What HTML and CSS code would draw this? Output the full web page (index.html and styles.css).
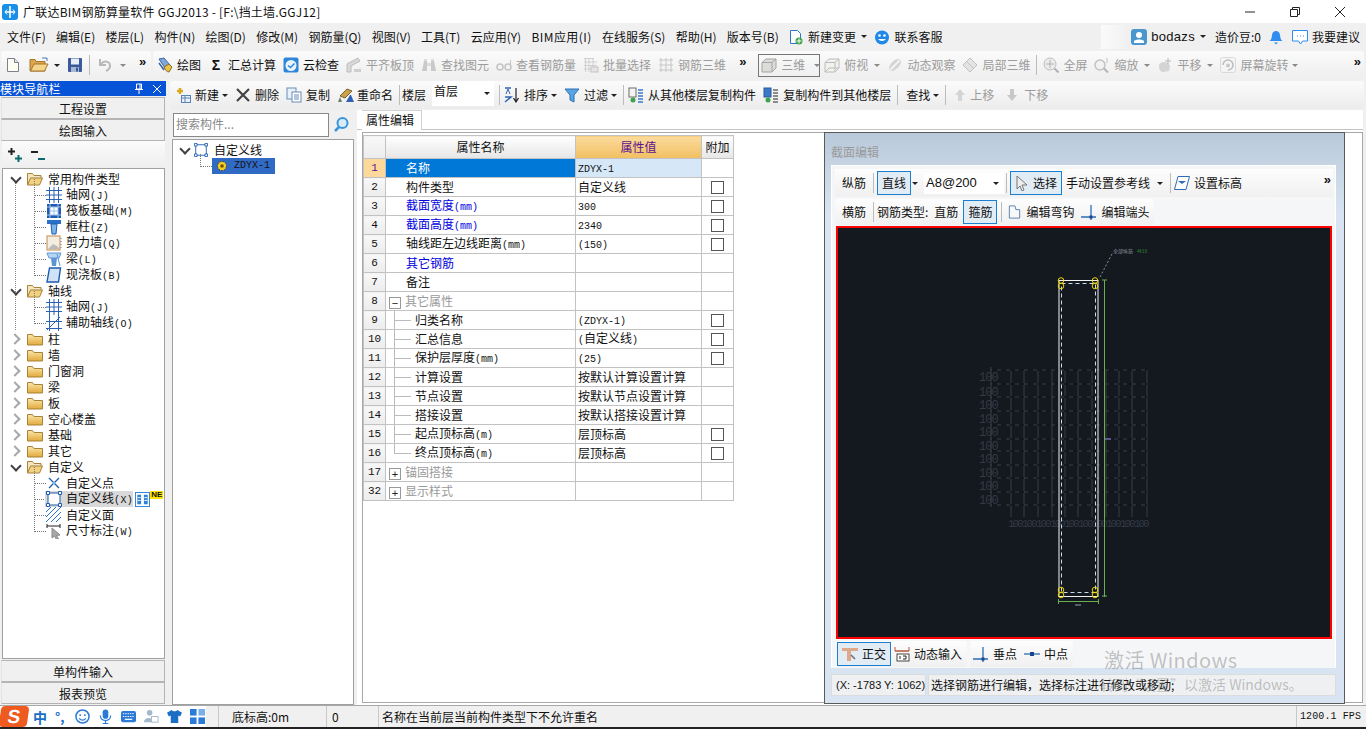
FILE: index.html
```html
<!DOCTYPE html>
<html lang="zh-CN">
<head>
    <meta charset="UTF-8">
    <title>广联达BIM钢筋算量软件 GGJ2013</title>
    <link rel="stylesheet" href="styles.css">
</head>
<body>
    <svg class="defs" aria-hidden="true">
        <symbol id="i-new" viewBox="0 0 16 16"><path d="M2.500 1.500h7l4 4v9h-11z" fill="#fdfdf3" stroke="#7c818c"/><path d="M9.500 1.500v4h4" fill="#e4e4e4" stroke="#7c818c"/></symbol>
        <symbol id="i-open" viewBox="0 0 22 16"><path d="M1 5V2.500h5l1 2h9V14H1z" fill="#dca64a" stroke="#a5772c"/><path d="M1.500 14l3.500-7h14l-3.500 7z" fill="#f5d58c" stroke="#a5772c"/><path d="M13 1l5 0 0 3" fill="none" stroke="#4a78b8"/></symbol>
        <symbol id="i-save" viewBox="0 0 16 16"><rect x="1" y="1" width="14" height="14" rx="1" fill="#3c5a9a"/><rect x="4" y="1.500" width="8" height="6" fill="#e8edf6"/><rect x="4" y="10" width="8" height="5" fill="#a9b8d4"/><rect x="9" y="10.500" width="2" height="4" fill="#3c5a9a"/></symbol>
        <symbol id="i-undo" viewBox="0 0 16 16"><path d="M3 2v6h6" fill="none" stroke="#b8b8b8" stroke-width="2"/><path d="M4 7c3-4 9-3 9 2 0 2-2 4-4 5" fill="none" stroke="#b8b8b8" stroke-width="2"/></symbol>
        <symbol id="i-draw" viewBox="0 0 16 16"><path d="M2 2l5-1 6 7-5 3z" fill="#7fa8d8" stroke="#3a64a8"/><path d="M7 10l5-3 3 3-3 5c-2 0-4-2-5-5z" fill="#e8c24a" stroke="#8a6d1c"/><path d="M2 6l5 7" stroke="#3a64a8" stroke-width="1.500"/></symbol>
        <symbol id="i-cloud" viewBox="0 0 16 16"><rect x="0.500" y="0.500" width="15" height="15" rx="2" fill="#2f86d8"/><circle cx="8" cy="8.500" r="5.500" fill="#e8f3fc"/><path d="M5 8.500l2.500 2 4-4" fill="none" stroke="#2f86d8" stroke-width="1.500"/></symbol>
        <symbol id="i-align" viewBox="0 0 16 16"><path d="M1 7l11-6 2 3-9 5v6H1z" fill="#d8d8d8" stroke="#bdbdbd"/><path d="M8 12h7v3H8z" fill="#cfcfcf"/></symbol>
        <symbol id="i-binoc" viewBox="0 0 16 16"><path d="M1 14l2-10h3v10zM10 14V4h3l2 10z" fill="#c9c9c9"/><path d="M3 2h3v2H3zM10 2h3v2h-3zM6 6h4v3H6z" fill="#dcdcdc"/></symbol>
        <symbol id="i-glass" viewBox="0 0 16 16"><circle cx="4" cy="10" r="3" fill="none" stroke="#c4c4c4" stroke-width="1.500"/><circle cx="12" cy="10" r="3" fill="none" stroke="#c4c4c4" stroke-width="1.500"/><path d="M14.500 10V3" stroke="#c4c4c4"/></symbol>
        <symbol id="i-batch" viewBox="0 0 16 16"><path d="M1 1.500h10M1 5h13M1 8.500h13M1 12h13M2.500 1v14M6 1v14M10 1v14" stroke="#cfcfcf" fill="none"/><rect x="8" y="10" width="7" height="5" fill="#e4e4e4" stroke="#c4c4c4"/></symbol>
        <symbol id="i-rebar" viewBox="0 0 16 16"><path d="M1 3h14M1 8h14M1 13h14M3 1v14M8 1v14M13 1v14" stroke="#c6c6c6" fill="none"/></symbol>
        <symbol id="i-cube" viewBox="0 0 16 16"><path d="M1 5.500L5 2h10v9l-4 4H1z" fill="#dcdcd8" stroke="#a4a4a4"/><path d="M1 5.500h10V15M11 5.500L15 2" fill="none" stroke="#a4a4a4"/></symbol>
        <symbol id="i-cube2" viewBox="0 0 16 16"><path d="M1 5.500L5 2h10v9l-4 4H1z" fill="#f1f1ee" stroke="#bcbcbc"/><path d="M1 5.500h10V15M11 5.500L15 2M1 15l4-4h10" fill="none" stroke="#bcbcbc"/></symbol>
        <symbol id="i-orbit" viewBox="0 0 16 16"><ellipse cx="8" cy="8" rx="7.500" ry="4" transform="rotate(-45 8 8)" fill="#d4d4d4"/><path d="M3 13L13 3" stroke="#f2f2f2" stroke-width="2"/></symbol>
        <symbol id="i-local" viewBox="0 0 16 16"><path d="M1 8l7-7 7 7-7 7z" fill="#e4e4e4" stroke="#bfbfbf"/><path d="M4.500 4.500l7 7M8 1l7 7M1 8l7 7" fill="none" stroke="#bfbfbf"/></symbol>
        <symbol id="i-zfull" viewBox="0 0 16 16"><circle cx="7" cy="7" r="6" fill="#ececec" stroke="#bcbcbc"/><path d="M7 3v8M3 7h8" stroke="#b0b0b0"/><path d="M11.500 11.500l4 4" stroke="#b0b0b0" stroke-width="2"/></symbol>
        <symbol id="i-zoom" viewBox="0 0 16 16"><circle cx="6" cy="8" r="5" fill="#f2f2f2" stroke="#c2c2c2" stroke-width="1.500"/><path d="M10 11.500l4 4" stroke="#b4b4b4" stroke-width="2"/><path d="M13 1v5" stroke="#c2c2c2"/></symbol>
        <symbol id="i-pan" viewBox="0 0 16 16"><path d="M2 9c0-3 3-4 5-4l4 1 2 3-1 5-6 1c-2 0-4-2-4-6z" fill="#d4d4d4"/><path d="M11 1v6M8 4h6" stroke="#b8b8b8"/></symbol>
        <symbol id="i-rot" viewBox="0 0 16 16"><rect x="0.500" y="0.500" width="15" height="15" rx="2" fill="#f4f4f4" stroke="#dadada"/><path d="M3 8a5 5 0 1 1 5 5" fill="none" stroke="#bdbdbd" stroke-width="1.500"/><circle cx="8" cy="8.500" r="2" fill="#c8c8c8"/></symbol>
        <symbol id="i-change" viewBox="0 0 16 16"><path d="M2.500 1.500h7l3 3v10h-10z" fill="#fff" stroke="#2d78c8"/><circle cx="11" cy="12" r="3.500" fill="#3da34a"/><path d="M11 9.500v5M8.500 12h5" stroke="#fff"/></symbol>
        <symbol id="i-face" viewBox="0 0 16 16"><circle cx="8" cy="8.500" r="7" fill="#2088e8"/><circle cx="5.500" cy="6.500" r="1.300" fill="#fff"/><circle cx="10.500" cy="6.500" r="1.300" fill="#fff"/><path d="M4 10c2 2.500 6 2.500 8 0" fill="#fff"/></symbol>
        <symbol id="i-user" viewBox="0 0 16 16"><rect width="16" height="16" rx="3" fill="#4a96cf"/><circle cx="8" cy="6" r="3" fill="#fff"/><path d="M3 14v-2c2-2 8-2 10 0v2z" fill="#fff"/></symbol>
        <symbol id="i-bell" viewBox="0 0 16 16"><path d="M1.500 12c2-1 2-3 2.500-6 .5-3 2-4 4-4s3.500 1 4 4c.5 3 .5 5 2.500 6z" fill="#2f8cf0"/><path d="M6 13.500h4l-2 2z" fill="#2f8cf0"/></symbol>
        <symbol id="i-chat" viewBox="0 0 16 16"><path d="M.5 1.500h15v10.500h-5l-2 3-2-3h-6z" fill="#fff" stroke="#2f8cf0"/><path d="M5 7h1M8 7h1M11 7h1" stroke="#2f8cf0"/></symbol>
        <symbol id="i-add" viewBox="0 0 16 16"><path d="M5 1v6M2 4h6" stroke="#d8a820" stroke-width="2.500"/><rect x="6.500" y="8.500" width="9" height="7" fill="#e8f0fa" stroke="#5a82b4"/><path d="M7 11h8M10 9v6" stroke="#5a82b4"/></symbol>
        <symbol id="i-del" viewBox="0 0 16 16"><path d="M2 2l12 12M14 2L2 14" stroke="#444" stroke-width="2.200"/></symbol>
        <symbol id="i-copy" viewBox="0 0 16 16"><rect x="1" y="1" width="9" height="11" fill="#e8f0fa" stroke="#6b8db8"/><rect x="6" y="5" width="9" height="10" fill="#fff" stroke="#6b8db8"/><path d="M8 8h5M8 10h5M8 12h5" stroke="#6b8db8"/></symbol>
        <symbol id="i-rename" viewBox="0 0 18 16"><path d="M3 9l7-7 5 2-7 7z" fill="#c9a24a" stroke="#77632b"/><path d="M1 15l2-5 2 5z" fill="#6d7f62"/><path d="M9 15l4-7h1l3 7z" fill="#2f62b4"/></symbol>
        <symbol id="i-sort" viewBox="0 0 16 16"><path d="M1 1h6M1 15l6-5H1" fill="none" stroke="#3064b4" stroke-width="1.500"/><path d="M2 7l2-5 2 5" fill="none" stroke="#3064b4"/><path d="M12 1v13M9.500 11l2.500 4 2.500-4" fill="none" stroke="#222" stroke-width="1.200"/></symbol>
        <symbol id="i-filter" viewBox="0 0 16 16"><path d="M1 2h14l-5 6v7l-4-2V8z" fill="#5ba4e0" stroke="#2a70b8"/></symbol>
        <symbol id="i-cp1" viewBox="0 0 16 16"><rect x="1" y="1" width="7" height="9" fill="#f4f4f4" stroke="#6a6a6a"/><path d="M10 3h5M10 6h5M10 9h5M10 12h5M10 15h5" stroke="#3a78c8" stroke-width="1.600"/><circle cx="5" cy="13" r="2.500" fill="#3da34a"/></symbol>
        <symbol id="i-cp2" viewBox="0 0 16 16"><rect x="1" y="1" width="7" height="9" fill="#3a78c8" stroke="#2a5a9a"/><path d="M10 3h5M10 6h5M10 9h5M10 12h5M10 15h5" stroke="#6a6a6a" stroke-width="1.600"/><circle cx="5" cy="13" r="2.500" fill="#3da34a"/></symbol>
        <symbol id="i-up" viewBox="0 0 16 16"><path d="M8 2l5 6h-3v6H6V8H3z" fill="#d4d4d4"/></symbol>
        <symbol id="i-down" viewBox="0 0 16 16"><path d="M8 14L3 8h3V2h4v6h3z" fill="#c8c8c8"/></symbol>
        <symbol id="i-plus" viewBox="0 0 16 16"><path d="M4.500 1v7M1 4.500h7" stroke="#222" stroke-width="2"/><path d="M11.500 8v7M8 11.500h7" stroke="#0a6a70" stroke-width="2"/></symbol>
        <symbol id="i-minus" viewBox="0 0 16 16"><path d="M1 5h7" stroke="#222" stroke-width="2"/><path d="M8 12h7" stroke="#0a6a70" stroke-width="2"/></symbol>
        <symbol id="i-fold" viewBox="0 0 16 14"><path d="M.5 13V2.500h5l1.500 2h8.500V13z" fill="url(#fold)" stroke="#a58338"/></symbol>
        <symbol id="i-foldo" viewBox="0 0 16 14"><path d="M.5 13V1.500h5l1.500 2h7V6" fill="#f2e6c4" stroke="#a58338"/><path d="M.5 13l3-7h12l-3 7z" fill="#f3cf80" stroke="#a58338"/></symbol>
        <symbol id="i-grid" viewBox="0 0 16 16"><path d="M0 3.500h16M0 8h16M0 12.500h16M3.500 0v16M8 0v16M12.500 0v16" stroke="#2a62b8" fill="none"/></symbol>
        <symbol id="i-raft" viewBox="0 0 16 16"><rect x="1" y="1" width="14" height="14" fill="#1e5cb0"/><rect x="4" y="4" width="8" height="8" fill="#fff"/><path d="M4 8h8M8 4v8M1 4h14M1 12h14M4 1v14M12 1v14" stroke="#9cc0ec"/></symbol>
        <symbol id="i-col" viewBox="0 0 16 16"><rect x="1" y="1" width="14" height="4" fill="#2a70c8"/><path d="M5 5h6l-1 10H6z" fill="#7db4ea" stroke="#1e5cb0"/></symbol>
        <symbol id="i-wall" viewBox="0 0 16 16"><rect x="1" y="1" width="13" height="14" fill="#f4eee2" stroke="#c08a50"/><path d="M2 14l5-5 4 2 3 3z" fill="#bbb"/><path d="M15 3v11" stroke="#777" stroke-dasharray="1 2"/></symbol>
        <symbol id="i-beam" viewBox="0 0 16 16"><path d="M1 2h14l-2 5H3z" fill="#b8d6f4" stroke="#5a96d4"/><path d="M5 7h6l-1 8H6z" fill="#5a96d4"/><path d="M11 3l3 12" stroke="#5a96d4"/></symbol>
        <symbol id="i-slab" viewBox="0 0 16 16"><path d="M3.500 1h11l-2 14H1z" fill="#cfe2f6" stroke="#1e5cb0" stroke-width="1.400"/></symbol>
        <symbol id="i-axis" viewBox="0 0 16 16"><path d="M0 6.500h16M0 13.500h16M3.500 0v16M12.500 0v16" stroke="#2a62b8" fill="none"/><path d="M1 15L14 2" stroke="#2a62b8"/></symbol>
        <symbol id="i-x" viewBox="0 0 16 16"><path d="M3 3l10 10M13 3L3 13" stroke="#1e5cb0" stroke-width="1.300"/><circle cx="8" cy="8" r="1.200" fill="#7db4ea"/></symbol>
        <symbol id="i-rect" viewBox="0 0 16 16"><rect x="2" y="2" width="12" height="12" fill="#fff" stroke="#1e5cb0"/><path d="M.5.500h3v3h-3zM12.500.500h3v3h-3zM.5 12.500h3v3h-3zM12.500 12.500h3v3h-3z" fill="#fff" stroke="#1e5cb0"/></symbol>
        <symbol id="i-hatch" viewBox="0 0 16 16"><path d="M0 5L5 0M0 10L10 0M0 15L15 0M5 15L15 5M10 15l5-5" stroke="#2a70c8"/></symbol>
        <symbol id="i-dim" viewBox="0 0 16 16"><path d="M1 3h13M1 1v4M14 1v4" stroke="#222"/><path d="M6 5l8 7-3.500.5 2 3.500-2 .5-2-3.500L6 15z" fill="#a8a8a8" stroke="#8a8a8a"/></symbol>
        <symbol id="i-gear" viewBox="0 0 12 12"><circle cx="6" cy="6" r="4.500" fill="#f0d020" stroke="#444" stroke-dasharray="2 1"/><circle cx="6" cy="6" r="1.800" fill="#7a4a10"/></symbol>
        <symbol id="i-sel" viewBox="0 0 12 16"><path d="M1 1v13l3-3 2 5 2-1-2-5h5z" fill="#eee" stroke="#777"/></symbol>
        <symbol id="i-elev" viewBox="0 0 16 16"><path d="M4 1.500h11.500L12 14.500H.5z" fill="#fff" stroke="#2d6db4"/><path d="M4 6h8l-4 3z" fill="#2d6db4"/></symbol>
        <symbol id="i-hook" viewBox="0 0 16 16"><path d="M2.500 1.500h6l1 4h4v9h-11z" fill="#f8f8f8" stroke="#5a7fb0"/></symbol>
        <symbol id="i-end" viewBox="0 0 16 16"><path d="M0 13h15M10 1v15" stroke="#2d6db4" stroke-width="1.300"/><rect x="8.500" y="11.500" width="3" height="3" fill="#17468a"/></symbol>
        <symbol id="i-mid" viewBox="0 0 16 16"><path d="M0 8h16" stroke="#2d6db4" stroke-width="1.300"/><rect x="6" y="6" width="4" height="4" fill="#17468a"/></symbol>
        <symbol id="i-ortho" viewBox="0 0 16 16"><path d="M0 2h16v3H9v10H5V5H0z" fill="#dfa889"/><path d="M9 9l4 4" stroke="#667" stroke-width="1.500"/></symbol>
        <symbol id="i-dyn" viewBox="0 0 16 16"><path d="M1 1v4h14V1M1 5h14" fill="none" stroke="#b8553f"/><rect x="3" y="8" width="12" height="7" fill="#fff" stroke="#444"/><path d="M6 10v3M9 10h3v3H9" stroke="#222" fill="none"/></symbol>
        <symbol id="i-smile" viewBox="0 0 16 16"><circle cx="8" cy="8" r="7" fill="#fff" stroke="#2a7ad8" stroke-width="1.600"/><circle cx="5.500" cy="6.500" r="1" fill="#2a7ad8"/><circle cx="10.500" cy="6.500" r="1" fill="#2a7ad8"/><path d="M4.500 10c2 2.500 5 2.500 7 0" fill="none" stroke="#2a7ad8" stroke-width="1.300"/></symbol>
        <symbol id="i-mic" viewBox="0 0 16 16"><rect x="5" y="0.500" width="6" height="10" rx="3" fill="#2a7ad8"/><path d="M2.500 7c0 7 11 7 11 0M8 12.500V16M5 15.500h6" fill="none" stroke="#2a7ad8" stroke-width="1.300"/></symbol>
        <symbol id="i-keys" viewBox="0 0 16 16"><rect y="2" width="16" height="12" rx="2" fill="#2a7ad8"/><path d="M2 5h12M2 8h12" stroke="#fff" stroke-dasharray="1.500 1"/><path d="M4 11h8" stroke="#fff" stroke-width="1.300"/></symbol>
        <symbol id="i-person" viewBox="0 0 16 16"><circle cx="6" cy="4" r="3" fill="#a4b8cc"/><path d="M0 14c0-6 10-6 10 0z" fill="#a4b8cc"/><rect x="8" y="8" width="7" height="6" fill="#fff" stroke="#a4b8cc"/></symbol>
        <symbol id="i-shirt" viewBox="0 0 16 16"><path d="M5 1L0 4l2 4 2-1v8h8V7l2 1 2-4-5-3c-1 2-5 2-6 0z" fill="#1a6ec4"/></symbol>
        <symbol id="i-apps" viewBox="0 0 16 16"><rect width="7" height="7" fill="#2a7ad8"/><rect x="9" width="7" height="7" fill="#7ab0e8"/><rect y="9" width="7" height="7" fill="#2a7ad8"/><rect x="9" y="9" width="7" height="7" fill="#2a7ad8"/></symbol>
        <symbol id="i-cols" viewBox="0 0 16 16"><rect x=".5" y=".5" width="15" height="15" fill="#fff" stroke="#2f7fd4"/><path d="M2.500 3h4v10h-4zM9.500 3h4v10h-4z" fill="#2f7fd4"/><path d="M3 6h3M3 9h3M10 6h3M10 9h3" stroke="#fff"/></symbol>
        <symbol id="i-logo" viewBox="0 0 16 16"><rect width="16" height="16" rx="3" fill="#1a8fe8"/><path d="M8 2v12M3 8h10" stroke="#fff" stroke-width="1.600"/><path d="M5 5.500L3 8l2 2.500M11 5.500L13 8l-2 2.500" fill="none" stroke="#fff"/></symbol>
        <linearGradient id="fold" x1="0" y1="0" x2="0" y2="1"><stop offset="0" stop-color="#fbe7a8"/><stop offset="1" stop-color="#e2a93c"/></linearGradient>
    </svg>

    <header class="titlebar">
        <svg class="logo"><use href="#i-logo"/></svg>
        <span class="title">广联达BIM钢筋算量软件 GGJ2013 - [F:\挡土墙.GGJ12]</span>
        <div class="winctl">
            <svg width="12" height="12"><path d="M1 6h10" stroke="#222"/></svg>
            <svg width="12" height="12"><path d="M1.500 3.500h7v7h-7zM3.500 3.500v-2h7v7h-2" fill="none" stroke="#222"/></svg>
            <svg width="12" height="12"><path d="M1 1l10 10M11 1L1 11" stroke="#222"/></svg>
        </div>
    </header>

    <nav class="menubar">
        <span>文件(F)</span><span>编辑(E)</span><span>楼层(L)</span><span>构件(N)</span><span>绘图(D)</span><span>修改(M)</span><span>钢筋量(Q)</span><span>视图(V)</span><span>工具(T)</span><span>云应用(Y)</span><span class="menu-bim">BIM应用(I)</span><span>在线服务(S)</span><span>帮助(H)</span><span>版本号(B)</span>
        <span class="tool menu-change"><svg class="ic"><use href="#i-change"/></svg>新建变更<i class="dd dd-menu"></i></span>
        <span class="tool menu-service"><svg class="ic"><use href="#i-face"/></svg>联系客服</span>
        <div class="menu-right">
            <div class="patch"></div>
            <span class="tool"><svg class="ic"><use href="#i-user"/></svg><b class="uname">bodazs</b><i class="dd dd-menu"></i></span>
            <span class="beans">造价豆:0</span>
            <svg class="ic bell"><use href="#i-bell"/></svg>
            <span class="tool"><svg class="ic"><use href="#i-chat"/></svg>我要建议</span>
        </div>
    </nav>

    <div class="toolbar">
        <div class="band band-file">
            <svg class="ic"><use href="#i-new"/></svg>
            <svg class="ic ic-wide"><use href="#i-open"/></svg><i class="dd"></i>
            <svg class="ic"><use href="#i-save"/></svg>
            <i class="sep"></i>
            <svg class="ic"><use href="#i-undo"/></svg><i class="dd dd-off"></i>
            <span class="more">»</span>
        </div>
        <div class="band band-main">
            <span class="tool"><svg class="ic"><use href="#i-draw"/></svg>绘图</span>
            <span class="tool"><b class="sigma">Σ</b>汇总计算</span>
            <span class="tool"><svg class="ic"><use href="#i-cloud"/></svg>云检查</span>
            <span class="tool off"><svg class="ic"><use href="#i-align"/></svg>平齐板顶</span>
            <span class="tool off"><svg class="ic"><use href="#i-binoc"/></svg>查找图元</span>
            <span class="tool off"><svg class="ic"><use href="#i-glass"/></svg>查看钢筋量</span>
            <span class="tool off"><svg class="ic"><use href="#i-batch"/></svg>批量选择</span>
            <span class="tool off"><svg class="ic"><use href="#i-rebar"/></svg>钢筋三维</span>
            <span class="more more-mid">»</span>
            <span class="tool off view-box"><svg class="ic"><use href="#i-cube"/></svg>三维<i class="dd dd-off dd-far"></i></span>
            <span class="tool off"><svg class="ic"><use href="#i-cube2"/></svg>俯视<i class="dd dd-off dd-far"></i></span>
            <span class="tool off"><svg class="ic"><use href="#i-orbit"/></svg>动态观察</span>
            <span class="tool off"><svg class="ic"><use href="#i-local"/></svg>局部三维</span>
            <i class="sep"></i>
            <span class="tool off"><svg class="ic"><use href="#i-zfull"/></svg>全屏</span>
            <span class="tool off"><svg class="ic"><use href="#i-zoom"/></svg>缩放<i class="dd dd-off dd-far"></i></span>
            <span class="tool off"><svg class="ic"><use href="#i-pan"/></svg>平移<i class="dd dd-off dd-far"></i></span>
            <span class="tool off"><svg class="ic"><use href="#i-rot"/></svg>屏幕旋转<i class="dd dd-off"></i></span>
            <span class="more more-end">»</span>
        </div>
    </div>

    <div class="workspace">
        <aside class="nav">
            <div class="nav-head"><span>模块导航栏</span>
                <svg width="10" height="11"><path d="M2.500 1h5v5h-5zM1 6.500h8M5 6.500V11M6 1v5" fill="none" stroke="#fff"/></svg>
                <svg width="10" height="10"><path d="M1 1l8 8M9 1L1 9" stroke="#fff"/></svg>
            </div>
            <div class="nav-btn">工程设置</div>
            <div class="nav-btn nav-btn-next">绘图输入</div>
            <div class="nav-tools">
                <svg class="ic"><use href="#i-plus"/></svg>
                <svg class="ic"><use href="#i-minus"/></svg>
            </div>
            <div class="tree">
                <div class="guide"></div>
                <div class="row"><i class="chev open"></i><svg class="fold"><use href="#i-foldo"/></svg><span>常用构件类型</span></div>
                <div class="row kid"><svg class="ic"><use href="#i-grid"/></svg><span>轴网<em>(J)</em></span></div>
                <div class="row kid"><svg class="ic"><use href="#i-raft"/></svg><span>筏板基础<em>(M)</em></span></div>
                <div class="row kid"><svg class="ic"><use href="#i-col"/></svg><span>框柱<em>(Z)</em></span></div>
                <div class="row kid"><svg class="ic"><use href="#i-wall"/></svg><span>剪力墙<em>(Q)</em></span></div>
                <div class="row kid"><svg class="ic"><use href="#i-beam"/></svg><span>梁<em>(L)</em></span></div>
                <div class="row kid last"><svg class="ic"><use href="#i-slab"/></svg><span>现浇板<em>(B)</em></span></div>
                <div class="row"><i class="chev open"></i><svg class="fold"><use href="#i-foldo"/></svg><span>轴线</span></div>
                <div class="row kid"><svg class="ic"><use href="#i-grid"/></svg><span>轴网<em>(J)</em></span></div>
                <div class="row kid last"><svg class="ic"><use href="#i-axis"/></svg><span>辅助轴线<em>(O)</em></span></div>
                <div class="row"><i class="chev"></i><svg class="fold"><use href="#i-fold"/></svg><span>柱</span></div>
                <div class="row"><i class="chev"></i><svg class="fold"><use href="#i-fold"/></svg><span>墙</span></div>
                <div class="row"><i class="chev"></i><svg class="fold"><use href="#i-fold"/></svg><span>门窗洞</span></div>
                <div class="row"><i class="chev"></i><svg class="fold"><use href="#i-fold"/></svg><span>梁</span></div>
                <div class="row"><i class="chev"></i><svg class="fold"><use href="#i-fold"/></svg><span>板</span></div>
                <div class="row"><i class="chev"></i><svg class="fold"><use href="#i-fold"/></svg><span>空心楼盖</span></div>
                <div class="row"><i class="chev"></i><svg class="fold"><use href="#i-fold"/></svg><span>基础</span></div>
                <div class="row"><i class="chev"></i><svg class="fold"><use href="#i-fold"/></svg><span>其它</span></div>
                <div class="row"><i class="chev open"></i><svg class="fold"><use href="#i-foldo"/></svg><span>自定义</span></div>
                <div class="row kid"><svg class="ic"><use href="#i-x"/></svg><span>自定义点</span></div>
                <div class="row kid current"><svg class="ic"><use href="#i-rect"/></svg><span>自定义线<em>(X)</em></span><svg class="ic cols"><use href="#i-cols"/></svg><b class="ne">NE</b></div>
                <div class="row kid"><svg class="ic"><use href="#i-hatch"/></svg><span>自定义面</span></div>
                <div class="row kid last"><svg class="ic"><use href="#i-dim"/></svg><span>尺寸标注<em>(W)</em></span></div>
            </div>
            <div class="nav-btn">单构件输入</div>
            <div class="nav-btn nav-btn-next">报表预览</div>
        </aside>

        <main class="main">
            <div class="toolbar2">
                <span class="tool"><svg class="ic"><use href="#i-add"/></svg>新建<i class="dd"></i></span>
                <span class="tool"><svg class="ic"><use href="#i-del"/></svg>删除</span>
                <span class="tool"><svg class="ic"><use href="#i-copy"/></svg>复制</span>
                <span class="tool tool-tight"><svg class="ic ic-18"><use href="#i-rename"/></svg>重命名</span>
                <i class="sep"></i>
                <span class="floor-label">楼层</span>
                <div class="floor-combo">首层<i class="dd"></i></div>
                <i class="sep"></i>
                <span class="tool pull-2"><svg class="ic"><use href="#i-sort"/></svg>排序<i class="dd"></i></span>
                <span class="tool"><svg class="ic"><use href="#i-filter"/></svg>过滤<i class="dd"></i></span>
                <i class="sep"></i>
                <span class="tool pull-2"><svg class="ic"><use href="#i-cp1"/></svg>从其他楼层复制构件</span>
                <span class="tool"><svg class="ic"><use href="#i-cp2"/></svg>复制构件到其他楼层</span>
                <i class="sep"></i>
                <span class="tool find">查找<i class="dd"></i></span>
                <i class="sep"></i>
                <span class="tool off tool-tight"><svg class="ic"><use href="#i-up"/></svg>上移</span>
                <span class="tool off move-down"><svg class="ic"><use href="#i-down"/></svg>下移</span>
            </div>
            <div class="content">
                <section class="components">
                    <div class="search">
                        <div class="search-box">搜索构件...</div>
                        <svg width="18" height="18"><circle cx="10.500" cy="7" r="5" fill="#d8ecfa" stroke="#3a94dc" stroke-width="2"/><path d="M7 11l-4 4" stroke="#3a94dc" stroke-width="2.500"/></svg>
                    </div>
                    <div class="comp-tree">
                        <div class="comp-row"><i class="chev open"></i><svg class="ic ic-14"><use href="#i-rect"/></svg><span>自定义线</span></div>
                        <div class="comp-row comp-item"><div class="comp-sel"><svg class="gear"><use href="#i-gear"/></svg><em>ZDYX-1</em></div></div>
                    </div>
                </section>
                <section class="props">
                    <div class="tabs"><div class="tab">属性编辑</div></div>
                    <div class="props-body">
                        <table class="grid">
                            <colgroup><col class="c-num"><col class="c-name"><col class="c-val"><col class="c-add"></colgroup>
                            <thead><tr><th class="num"></th><th>属性名称</th><th class="hot">属性值</th><th>附加</th></tr></thead>
                            <tbody>
                                <tr class="active"><td class="num">1</td><td class="name">名称</td><td class="val"><em>ZDYX-1</em></td><td></td></tr>
                                <tr><td class="num">2</td><td class="name">构件类型</td><td class="val">自定义线</td><td><i class="chk"></i></td></tr>
                                <tr><td class="num">3</td><td class="name blue">截面宽度<em>(mm)</em></td><td class="val"><em>300</em></td><td><i class="chk"></i></td></tr>
                                <tr><td class="num">4</td><td class="name blue">截面高度<em>(mm)</em></td><td class="val"><em>2340</em></td><td><i class="chk"></i></td></tr>
                                <tr><td class="num">5</td><td class="name">轴线距左边线距离<em>(mm)</em></td><td class="val"><em>(150)</em></td><td><i class="chk"></i></td></tr>
                                <tr><td class="num">6</td><td class="name blue">其它钢筋</td><td></td><td></td></tr>
                                <tr><td class="num">7</td><td class="name">备注</td><td></td><td></td></tr>
                                <tr><td class="num">8</td><td class="name group"><i class="box">−</i>其它属性</td><td></td><td></td></tr>
                                <tr><td class="num">9</td><td class="name sub">归类名称</td><td class="val"><em>(ZDYX-1)</em></td><td><i class="chk"></i></td></tr>
                                <tr><td class="num">10</td><td class="name sub">汇总信息</td><td class="val"><em>(</em>自定义线<em>)</em></td><td><i class="chk"></i></td></tr>
                                <tr><td class="num">11</td><td class="name sub">保护层厚度<em>(mm)</em></td><td class="val"><em>(25)</em></td><td><i class="chk"></i></td></tr>
                                <tr><td class="num">12</td><td class="name sub">计算设置</td><td class="val">按默认计算设置计算</td><td></td></tr>
                                <tr><td class="num">13</td><td class="name sub">节点设置</td><td class="val">按默认节点设置计算</td><td></td></tr>
                                <tr><td class="num">14</td><td class="name sub">搭接设置</td><td class="val">按默认搭接设置计算</td><td></td></tr>
                                <tr><td class="num">15</td><td class="name sub">起点顶标高<em>(m)</em></td><td class="val">层顶标高</td><td><i class="chk"></i></td></tr>
                                <tr><td class="num">16</td><td class="name sub sub-last">终点顶标高<em>(m)</em></td><td class="val">层顶标高</td><td><i class="chk"></i></td></tr>
                                <tr><td class="num">17</td><td class="name group"><i class="box">+</i>锚固搭接</td><td></td><td></td></tr>
                                <tr><td class="num">32</td><td class="name group"><i class="box">+</i>显示样式</td><td></td><td></td></tr>
                            </tbody>
                        </table>
                    </div>
                </section>
            </div>
        </main>

        <div class="dialog">
            <div class="dlg-title">截面编辑</div>
            <div class="dlg-inner">
                <div class="dlg-bar">
                    <span>纵筋</span><i class="sep"></i>
                    <span class="pressed">直线</span><i class="dd dd-line"></i>
                    <div class="dlg-combo">A8@200<i class="dd"></i></div>
                    <i class="sep sep-tight"></i>
                    <span class="pressed tool pick"><svg class="ic ic-12"><use href="#i-sel"/></svg>选择</span>
                    <span class="tool">手动设置参考线<i class="dd dd-refline"></i></span>
                    <i class="sep"></i>
                    <span class="tool"><svg class="ic"><use href="#i-elev"/></svg>设置标高</span>
                    <span class="more more-end">»</span>
                </div>
                <div class="dlg-bar dlg-bar2">
                    <span>横筋</span><i class="sep"></i>
                    <span class="bar-type">钢筋类型:</span><span>直筋</span>
                    <span class="pressed stirrup">箍筋</span>
                    <i class="sep"></i>
                    <span class="tool hook"><svg class="ic ic-15"><use href="#i-hook"/></svg>编辑弯钩</span>
                    <span class="tool head"><svg class="ic"><use href="#i-end"/></svg>编辑端头</span>
                </div>
                <svg class="canvas" viewBox="838 228 492 409">
                    <rect x="838" y="228" width="492" height="409" fill="#14181f"/>
                    <g class="faint-lines">
                        <path d="M990 370H1147M990 384H1147M990 397H1147M990 411H1147M990 425H1147M990 439H1147M990 451H1147M990 465H1147M990 478H1147M990 492H1147M990 505H1147"/>
                        <path d="M991 367V507M1011 370V517M1024 370V517M1038 370V517M1052 370V517M1065 370V517M1078 370V517M1092 370V517M1106 370V517M1119 370V517M1132 370V517M1147 370V517"/>
                    </g>
                    <path class="black-dash" d="M992 370H1147M992 384H1147M992 397H1147M992 411H1147M992 425H1147M992 439H1147M992 451H1147M992 465H1147M992 478H1147M992 492H1147M992 505H1147"/>
                    <g class="dim-text">
                        <text x="979" y="381">100</text><text x="979" y="396">100</text><text x="979" y="409">100</text><text x="979" y="423">100</text><text x="979" y="436">100</text><text x="979" y="450">100</text><text x="979" y="463">100</text><text x="979" y="477">100</text><text x="979" y="490">100</text><text x="979" y="504">100</text>
                    </g>
                    <g class="dim-text dim-bottom">
                        <text x="1008" y="527">100</text><text x="1022" y="527">100</text><text x="1036" y="527">100</text><text x="1050" y="527">100</text><text x="1064" y="527">100</text><text x="1078" y="527">100</text><text x="1092" y="527">100</text><text x="1106" y="527">100</text><text x="1120" y="527">100</text><text x="1134" y="527">100</text>
                    </g>
                    <rect x="1059" y="280.500" width="39" height="316" fill="none" stroke="#f2f2f2" stroke-width="1"/>
                    <rect x="1061.500" y="283.500" width="34" height="309" fill="none" stroke="#c8d8ee" stroke-dasharray="4 3"/>
                    <path d="M1104.500 280V597M1102 280h5M1102 596h5M1058 601.500h41M1058.500 599v5M1098.500 599v5" fill="none" stroke="#6ab04c"/>
                    <g fill="none" stroke="#f0d800">
                        <circle cx="1061" cy="280.500" r="2.800"/><circle cx="1061" cy="286" r="2.800"/><circle cx="1095" cy="280.500" r="2.800"/><circle cx="1095" cy="286" r="2.800"/>
                        <circle cx="1061" cy="590" r="2.800"/><circle cx="1061" cy="595" r="2.800"/><circle cx="1095" cy="590" r="2.800"/><circle cx="1095" cy="595" r="2.800"/>
                    </g>
                    <path d="M1100 277L1113 252" stroke="#8a8f96" stroke-dasharray="2 2"/>
                    <text class="tiny" x="1113" y="253">全部纵筋</text><text class="tiny tiny-g" x="1137" y="253">4t18</text>
                    <path d="M1105 439h6" stroke="#5a5a90" stroke-width="2"/>
                    <path d="M1075 605h6" stroke="#555c66" stroke-width="2"/>
                </svg>
                <div class="dlg-snap">
                    <div class="snap-band">
                        <span class="pressed tool"><svg class="ic"><use href="#i-ortho"/></svg>正交</span>
                        <span class="tool"><svg class="ic"><use href="#i-dyn"/></svg>动态输入</span>
                    </div>
                    <div class="snap-band">
                        <span class="tool"><svg class="ic"><use href="#i-end"/></svg>垂点</span>
                        <span class="tool"><svg class="ic"><use href="#i-mid"/></svg>中点</span>
                    </div>
                </div>
            </div>
            <div class="dlg-status">
                <div class="coords">(X: -1783 Y: 1062)</div>
                <div class="dlg-msg">选择钢筋进行编辑，选择标注进行修改或移动;</div>
            </div>
        </div>

        <div class="watermark">
            <div class="wm-big">激活 Windows</div>
            <div class="wm-small">转到“设置”以激活 Windows。</div>
        </div>
    </div>

    <footer class="statusbar">
        <div class="ime">
            <b class="ime-logo">S</b>
            <b class="ime-zh">中</b>
            <b class="ime-punc">°,</b>
            <svg class="ic"><use href="#i-smile"/></svg>
            <svg class="ic"><use href="#i-mic"/></svg>
            <svg class="ic"><use href="#i-keys"/></svg>
            <svg class="ic"><use href="#i-person"/></svg>
            <svg class="ic"><use href="#i-shirt"/></svg>
            <svg class="ic"><use href="#i-apps"/></svg>
        </div>
        <div class="cell cell-elev">底标高:0m</div>
        <div class="cell cell-zero">0</div>
        <div class="cell cell-msg">名称在当前层当前构件类型下不允许重名</div>
        <div class="cell cell-fps">1200.1 FPS</div>
    </footer>
</body>
</html>
```

FILE: styles.css
```css
* {
    margin: 0;
    padding: 0;
    box-sizing: border-box;
}

html, body {
    height: 729px;
    overflow: hidden;
}

body {
    background-color: #f0f0f0;
    color: #111;
    font-family: "Noto Sans CJK SC", "Liberation Sans", sans-serif;
    font-size: 12px;
    line-height: 16px;
}

em, i, b {
    font-style: normal;
}

.defs {
    position: absolute;
    width: 0;
    height: 0;
}

/* 通用 */
.ic {
    width: 16px;
    height: 16px;
    flex: none;
}

.ic-wide { width: 22px; }
.ic-18 { width: 18px; }
.ic-15 { width: 15px; }
.ic-14 { width: 14px; height: 14px; }
.ic-12 { width: 12px; }

.tool {
    display: inline-flex;
    align-items: center;
    gap: 4px;
    white-space: nowrap;
}

.tool.off {
    color: #9c9c9c;
}

.dd {
    display: inline-block;
    width: 0;
    height: 0;
    flex: none;
    border-left: 3px solid transparent;
    border-right: 3px solid transparent;
    border-top: 3px solid #222;
}

.dd-off { border-top-color: #8a8a8a; }
.dd-far { margin-left: 2px; }
.dd-menu { margin-left: 1px; }

.sep {
    display: block;
    flex: none;
    width: 1px;
    height: 20px;
    background-color: #bcbcbc;
}

.more {
    font: bold 13px/13px "Liberation Sans", sans-serif;
    color: #111;
    align-self: flex-start;
    margin-top: 4px;
}

/* 标题栏 */
.titlebar {
    height: 23px;
    background-color: #fff;
    display: flex;
    align-items: center;
    padding-left: 2px;
}

.logo {
    width: 16px;
    height: 16px;
}

.title {
    margin-left: 5px;
    font-size: 12px;
    letter-spacing: 0.22px;
}

.winctl {
    margin-left: auto;
    display: flex;
    gap: 33px;
    padding-right: 20px;
}

/* 菜单栏 */
.menubar {
    height: 27px;
    display: flex;
    align-items: center;
    gap: 10.3px;
    padding-left: 7px;
    white-space: nowrap;
    background-color: #f0f0f0;
}

.menu-bim {
    letter-spacing: 0.45px;
}

.menu-change {
    margin-left: -1px;
}

.menu-service {
    margin-left: -3px;
}

.menu-right {
    margin-left: auto;
    display: flex;
    align-items: center;
    gap: 9px;
    padding-right: 6px;
}

.patch {
    width: 24px;
    height: 24px;
    margin-right: -3px;
    background: linear-gradient(to right, #fafafa, #f2f2f2);
}

.uname {
    font-family: "Liberation Sans", sans-serif;
    font-weight: normal;
    font-size: 13px;
    letter-spacing: 0.3px;
}

.beans {
    margin-right: -2px;
}

.bell {
    margin-right: -1px;
}

/* 工具栏 */
.toolbar {
    height: 31px;
    display: flex;
    gap: 2px;
    padding: 1px 2px 2px 1px;
}

.band {
    display: flex;
    align-items: center;
    background: linear-gradient(#fbfbfb, #eeeeee);
    border-radius: 3px;
    white-space: nowrap;
}

.band-file {
    width: 150px;
    padding-left: 4px;
    position: relative;
}

.band-file .ic-wide { margin-left: 8px; }
.band-file .dd { margin-left: 3px; }
.band-file .ic-wide + .dd + .ic { margin-left: 7px; }
.band-file .sep { margin: 0 7px 0 6px; }
.band-file .dd-off { margin-left: 7px; }
.band-file .more { margin-left: 13px; }

.band-main {
    flex: 1;
    gap: 7px;
    padding-left: 4px;
}

.band-main .sep {
    margin: 0 -1px;
}

.sigma {
    width: 16px;
    text-align: center;
    font: bold 14px/16px "Liberation Sans", sans-serif;
}

.more-mid {
    margin-left: 6px;
    margin-right: 5px;
}

.view-box {
    width: 62px;
    height: 23px;
    margin-right: -3px;
    padding-left: 2px;
    border: 1px solid #777;
}

.view-box .dd-far {
    margin-left: 5px;
}

.more-end {
    margin-left: auto;
    margin-right: 3px;
}

/* 主区域 */
.workspace {
    height: 624px;
    display: flex;
    position: relative;
}

/* 模块导航栏 */
.nav {
    width: 166px;
    flex: none;
    display: flex;
    flex-direction: column;
}

.nav-head {
    height: 15px;
    background-color: #0653d8;
    color: #fff;
    display: flex;
    align-items: center;
    gap: 8px;
    padding-right: 4px;
    font-size: 12px;
    line-height: 15px;
}

.nav-head span {
    margin-right: auto;
    letter-spacing: 0.1px;
}

.nav-btn {
    height: 22px;
    margin: 1px 1px 0;
    line-height: 21px;
    text-align: center;
    background-color: #f0f0f0;
    border: 1px solid #b4b4b4;
    border-left-color: #e4e4e4;
    flex: none;
}

.nav-btn-next {
    margin-top: 0;
}

.nav-tools {
    height: 27px;
    margin: 0 1px 0 2px;
    display: flex;
    align-items: center;
    gap: 7px;
    padding-left: 5px;
    background: linear-gradient(#fbfbfb, #eeeeee);
    flex: none;
}

.tree {
    height: 491px;
    margin: 0 1px 0 2px;
    padding-top: 2px;
    border: 1px solid #a0a0a0;
    background-color: #fff;
    position: relative;
    overflow: hidden;
}

.guide {
    position: absolute;
    left: 12px;
    top: 14px;
    height: 147px;
    border-left: 1px dotted #888;
}

.row {
    height: 16px;
    display: flex;
    align-items: center;
    padding-left: 7px;
    white-space: nowrap;
    position: relative;
}

.row em {
    font: 10px/16px "Liberation Mono", monospace;
    letter-spacing: 0.4px;
}

.chev {
    width: 11px;
    height: 11px;
    flex: none;
    position: relative;
    margin-right: 6px;
}

.chev::before {
    content: "";
    position: absolute;
    left: 1px;
    top: 1px;
    width: 6px;
    height: 6px;
    border-right: 2px solid #a8a8a8;
    border-bottom: 2px solid #a8a8a8;
    transform: rotate(-45deg);
}

.chev.open::before {
    left: 2px;
    top: 0;
    border-color: #444;
    transform: rotate(45deg);
}

.fold {
    width: 16px;
    height: 14px;
    flex: none;
    margin-right: 5px;
}

.kid {
    padding-left: 43px;
}

.kid > span {
    margin-left: 4px;
}

.kid::before {
    content: "";
    position: absolute;
    left: 31px;
    top: -8px;
    width: 11px;
    height: 16px;
    border-left: 1px dotted #777;
    border-bottom: 1px dotted #777;
}

.current {
    width: 100%;
}

.current::after {
    content: "";
    position: absolute;
    left: 42px;
    top: 0;
    width: 88px;
    height: 16px;
    background-color: #d9d9d9;
    z-index: 0;
}

.current > * {
    position: relative;
    z-index: 1;
}

.current > .cols {
    width: 15px;
    height: 15px;
    margin-left: 2px;
}

.current > .ne {
    align-self: flex-start;
    height: 8px;
    padding: 0 1px;
    background-color: #ffe400;
    font: bold 8px/8px "Liberation Sans", sans-serif;
}

/* 右侧 */
.main {
    flex: 1;
    min-width: 0;
    display: flex;
    flex-direction: column;
    padding-left: 4px;
}

.toolbar2 {
    height: 28px;
    width: 1194px;
    display: flex;
    align-items: center;
    gap: 7px;
    padding-left: 5px;
    white-space: nowrap;
    background: linear-gradient(#fbfbfb, #ececec);
    border-radius: 3px;
}

.toolbar2 .dd { margin-left: -1px; }
.toolbar2 .sep { margin: 0 -1px; }
.tool-tight { gap: 2px; }
.pull-2 { margin-left: -2px; }
.find { margin-left: 2px; }
.move-down { margin-left: 3px; }

.floor-label {
    margin-left: -4px;
}

.floor-combo {
    width: 62px;
    height: 25px;
    align-self: flex-start;
    margin: 0 -1px;
    padding: 2px 0 0 2px;
    background-color: #fff;
    position: relative;
}

.floor-combo .dd {
    position: absolute;
    right: 4px;
    top: 11px;
}

.content {
    flex: 1;
    display: flex;
    padding-top: 1px;
}

/* 构件列表 */
.components {
    width: 182px;
    margin-left: 2px;
    flex: none;
    display: flex;
    flex-direction: column;
}

.search {
    height: 29px;
    display: flex;
    align-items: center;
    padding: 1px 0 0 1px;
    gap: 3px;
}

.search-box {
    width: 156px;
    height: 24px;
    padding: 2px 0 0 2px;
    border: 1px solid #888;
    background-color: #fff;
    color: #8a8a8a;
}

.comp-tree {
    flex: 1;
    border: 1px solid #a0a0a0;
    background-color: #fff;
    padding-top: 2px;
}

.comp-row {
    height: 16px;
    display: flex;
    align-items: center;
    padding-left: 6px;
    gap: 4px;
    position: relative;
}

.comp-row .chev { margin-right: 0; }
.comp-row span { margin-left: 2px; }

.comp-item::before {
    content: "";
    position: absolute;
    left: 27px;
    top: -4px;
    width: 11px;
    height: 12px;
    border-left: 1px dotted #777;
    border-bottom: 1px dotted #777;
}

.comp-sel {
    width: 63px;
    height: 16px;
    margin-left: 33px;
    padding-left: 4px;
    display: flex;
    align-items: center;
    gap: 6px;
    background-color: #316ac5;
}

.gear {
    width: 12px;
    height: 12px;
}

.comp-sel em {
    font: 10px/16px "Liberation Mono", monospace;
}

/* 属性编辑 */
.props {
    width: 1006px;
    margin-left: 3px;
    flex: none;
    display: flex;
    flex-direction: column;
    background-color: #fff;
}

.tabs {
    height: 20px;
    padding-left: 5px;
    border-bottom: 1px solid #c4c4c4;
}

.tab {
    width: 60px;
    height: 20px;
    padding-left: 4px;
    line-height: 18px;
    background-color: #fff;
    border: 1px solid #d0d0d0;
    border-bottom: none;
    border-left: none;
}

.props-body {
    flex: 1;
    margin: 2px 0 2px 5px;
    padding-top: 2px;
    border: 1px solid #a8a8a8;
}

.grid {
    border-collapse: collapse;
    table-layout: fixed;
    width: 370px;
}

.c-num { width: 22px; }
.c-name { width: 190px; }
.c-val { width: 126px; }
.c-add { width: 32px; }

.grid tr {
    height: 19px;
}

.grid th, .grid td {
    border: 1px solid #c2c2c2;
    font-weight: normal;
    height: 19px;
    line-height: 14px;
    white-space: nowrap;
    overflow: hidden;
    padding: 0;
}

.grid thead tr,
.grid th {
    height: 23px;
}

.grid th {
    text-align: center;
    background: linear-gradient(#ffffff, #e6e6e6);
}

.grid th.hot {
    color: #5c1290;
    background: linear-gradient(#fbdb9c, #f2bf62);
}

.grid .num {
    text-align: center;
    background: linear-gradient(#f8f8f8, #ececec);
    font: 11px/14px "Liberation Mono", monospace;
}

.grid .name {
    padding-left: 20px;
    position: relative;
}

.grid em {
    font: 10px/14px "Liberation Mono", monospace;
}

.grid .val {
    padding-left: 2px;
}

.grid .blue {
    color: #0000e0;
}

.active .num {
    color: #5c1290;
    background: #fcd99a !important;
}

.active .name {
    background-color: #0078d7;
    color: #fff;
}

.active .val {
    background-color: #d6e8f8;
}

.grid .group {
    padding-left: 3px;
    color: #9a9a9a;
}

.box {
    display: inline-block;
    width: 12px;
    height: 12px;
    margin-right: 4px;
    border: 1px solid #999;
    color: #222;
    font: 11px/10px "Liberation Sans", sans-serif;
    text-align: center;
    vertical-align: -1px;
}

.grid .sub {
    padding-left: 29px;
}

.sub::before {
    content: "";
    position: absolute;
    left: 8px;
    top: -1px;
    width: 16px;
    height: 10px;
    border-left: 1px solid #bbb;
    border-bottom: 1px solid #bbb;
}

.sub::after {
    content: "";
    position: absolute;
    left: 8px;
    top: 9px;
    height: 11px;
    border-left: 1px solid #bbb;
}

.sub-last::after {
    display: none;
}

.chk {
    display: block;
    width: 13px;
    height: 13px;
    margin: 0 auto;
    border: 1px solid #555;
    background-color: #fff;
}

/* 截面编辑窗口 */
.dialog {
    position: absolute;
    left: 824px;
    top: 51px;
    width: 521px;
    height: 572px;
    border: 1px solid #5a5a5a;
    background: linear-gradient(#b9c9da, #d8e4f1 80px, #d8e4f1);
    padding: 0 6px;
}

.dlg-title {
    height: 32px;
    padding-top: 11px;
    color: #9a9a9a;
}

.dlg-inner {
    width: 505px;
    height: 503px;
    background-color: #f5f6f7;
    border: 1px solid #fff;
    border-bottom: none;
    padding: 3px 2px 0 3px;
}

.dlg-bar {
    height: 28px;
    display: flex;
    align-items: center;
    gap: 4px;
    padding-left: 7px;
    white-space: nowrap;
    background: linear-gradient(#fdfdfd, #f0f0f0);
}

.dlg-bar .sep {
    margin: 0 -1px 0 3px;
}

.dlg-bar .sep-tight {
    margin-left: -2px;
}

.dlg-bar .stirrup + .sep {
    margin-left: 0;
}

.dd-line { margin-left: -3px; }
.dd-refline { margin-left: 3px; }

.pressed {
    height: 24px;
    padding: 0 4px;
    line-height: 22px;
    border: 1px solid #1a7fd0;
    background-color: #e2ecf5;
}

.pick {
    width: 52px;
    padding: 0 4px 0 5px;
    gap: 5px;
}

.dlg-combo {
    width: 80px;
    height: 21px;
    margin-left: 2px;
    padding: 1px 0 0 2px;
    background-color: #fff;
    font-family: "Liberation Sans", sans-serif;
    font-size: 13px;
    line-height: 18px;
    position: relative;
}

.dlg-combo .dd {
    position: absolute;
    right: 5px;
    top: 9px;
}

.dlg-bar .more-end {
    margin-right: 2px;
}

.dlg-bar2 {
    width: 319px;
    height: 26px;
    margin-top: 2px;
    border-radius: 3px;
}

.bar-type { margin-right: 2px; }
.stirrup { margin-left: 1px; }
.hook { margin-left: 2px; }
.head { margin-left: 3px; }

.canvas {
    display: block;
    width: 496px;
    height: 413px;
    margin: 1px 0 0 1px;
    border: 2px solid #f00;
}

.faint-lines path {
    fill: none;
    stroke: #363e48;
}

.black-dash {
    fill: none;
    stroke: #000;
    stroke-dasharray: 5 4;
}

.dim-text text {
    font: 12px "Liberation Mono", monospace;
    letter-spacing: -1px;
    fill: #333b46;
}

.dim-bottom text {
    font-size: 11px;
    letter-spacing: -2.1px;
}

.tiny {
    font: 5px "Noto Sans CJK SC", sans-serif;
    fill: #8a929c;
}

.tiny-g {
    fill: #2e8b2e;
}

.dlg-snap {
    display: flex;
    gap: 3px;
    height: 26px;
    margin-top: 2px;
    padding-left: 2px;
}

.snap-band {
    display: flex;
    align-items: center;
    gap: 3px;
    padding-right: 5px;
    background: linear-gradient(#fdfdfd, #f0f0f0);
    border-radius: 3px;
}

.snap-band:last-child {
    padding-left: 3px;
    gap: 7px;
}

.dlg-status {
    display: flex;
    gap: 2px;
    width: 505px;
    height: 22px;
    margin-top: 6px;
}

.coords {
    width: 95px;
    padding: 3px 0 0 4px;
    background-color: #eef0f2;
    border: 1px solid #dcdcdc;
    font-family: "Liberation Sans", sans-serif;
    font-size: 11px;
    line-height: 15px;
    white-space: nowrap;
}

.dlg-msg {
    flex: 1;
    padding: 2px 0 0 2px;
    background-color: #eef0f2;
    border: 1px solid #dcdcdc;
    white-space: nowrap;
}

.watermark {
    position: absolute;
    left: 1104px;
    top: 566px;
    color: rgba(60, 60, 60, 0.3);
    white-space: nowrap;
    pointer-events: none;
}

.wm-big {
    font: 20px/26px "Noto Sans CJK SC", "Noto Sans", sans-serif;
    letter-spacing: 0.4px;
}

.wm-small {
    margin: 1px 0 0 -4px;
    font: 14px/20px "Noto Sans CJK SC", "Noto Sans", sans-serif;
}

/* 状态栏 */
.statusbar {
    height: 24px;
    display: flex;
    background-color: #f0f0f0;
    border-top: 1px solid #a8a8a8;
    border-bottom: 2px solid #222;
    white-space: nowrap;
}

.ime {
    width: 206px;
    display: flex;
    align-items: center;
    gap: 8px;
    background-color: #fff;
    flex: none;
}

.ime .ic { width: 15px; height: 15px; }

.ime-logo {
    width: 28px;
    height: 21px;
    margin-right: -3px;
    background-color: #ee5a1f;
    border-radius: 4px;
    transform: skewX(-8deg);
    color: #fff;
    text-align: center;
    font: bold 19px/21px "Liberation Sans", sans-serif;
}

.ime-zh {
    color: #1a6ec4;
    font-size: 14px;
}

.ime-punc {
    width: 12px;
    color: #1a6ec4;
    font-size: 13px;
    line-height: 12px;
}

.cell {
    height: 100%;
    padding: 3px 0 0 3px;
    border-left: 1px solid #c8c8c8;
    flex: none;
}

.cell-elev {
    margin-left: 12px;
    width: 108px;
    padding-left: 13px;
}

.cell-zero {
    width: 52px;
    padding-left: 5px;
}

.cell-msg {
    width: 918px;
}

.cell-fps {
    width: 65px;
    font: 10px/16px "Liberation Mono", monospace;
    letter-spacing: 0.1px;
}
```
